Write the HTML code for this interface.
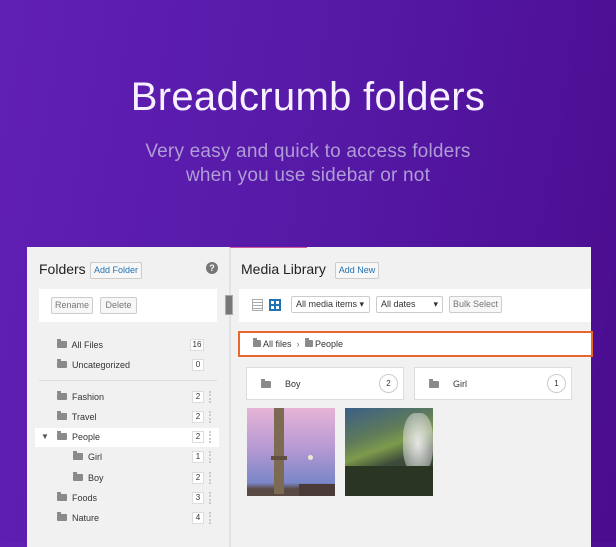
<!DOCTYPE html>
<html><head><style>
*{margin:0;padding:0;box-sizing:border-box}
body{width:616px;height:542px;overflow:hidden;background:linear-gradient(100deg,#6120b4 0%,#5519a6 50%,#4b0c8e 100%);font-family:"Liberation Sans",sans-serif;position:relative}
.t{position:absolute;left:0;width:616px;text-align:center;color:#f6f0ff;font-size:40px;top:75px;letter-spacing:0.3px}
.s{position:absolute;left:0;width:616px;text-align:center;color:#b09cd6;font-size:19px;line-height:24px;top:140px;letter-spacing:0.2px}
.panel{position:absolute;left:27px;top:247px;width:564px;height:300px;background:#f1f1f1}
.div{position:absolute;left:202px;top:0;width:2px;height:300px;background:#e2e2e2}
.a{position:absolute;font-size:9px;color:#333}
.btn{position:absolute;background:#f7f7f7;border:1px solid #ccc;font-size:9px;color:#555;text-align:center;line-height:15px;border-radius:2px}
.fld{display:inline-block;width:10px;height:7px;background:#8a8a8a;border-radius:1px;position:relative}
.fld:before{content:"";position:absolute;left:0;top:-2px;width:4px;height:2px;background:#8a8a8a}
.cnt{position:absolute;width:12px;height:12px;background:#fff;border:1px solid #ddd;font-size:8px;line-height:10px;text-align:center;color:#333}
.dots{position:absolute;width:2px;height:12px;border-left:2px dotted #ccc}
.card{position:absolute;background:#fff;border:1px solid #ddd;height:33px}
.circ{position:absolute;width:19px;height:19px;border-radius:50%;border:1px solid #ccc;font-size:8px;text-align:center;line-height:17px;color:#333}
</style></head><body>
<div class="t">Breadcrumb folders</div>
<div class="s">Very easy and quick to access folders<br>when you use sidebar or not</div>
<div class="panel">
<div class="div"></div>
<div style="position:absolute;left:203px;top:0;width:77px;height:1px;background:#d05aa0"></div>
<div class="a" style="left:12px;top:14px;font-size:14px;color:#222">Folders</div>
<div class="btn" style="left:63px;top:15px;width:52px;color:#2271b1">Add Folder</div>
<div style="position:absolute;left:179px;top:15px;width:12px;height:12px;border-radius:50%;background:#777;color:#fff;font-size:9px;text-align:center;line-height:12px;font-weight:bold">?</div>
<div style="position:absolute;left:12px;top:42px;width:178px;height:33px;background:#fff"></div>
<div class="btn" style="left:24px;top:50px;width:42px;height:17px;color:#777">Rename</div>
<div class="btn" style="left:73px;top:50px;width:37px;height:17px;color:#777">Delete</div>
<div style="position:absolute;left:198px;top:48px;width:8px;height:20px;background:#777;border:1px solid #aaa"></div>
<div style="position:absolute;left:12px;top:133px;width:178px;height:1px;background:#ddd"></div>
<div style="position:absolute;left:8px;top:181px;width:184px;height:19px;background:#fff"></div>
<div class="a" style="left:30px;top:93px"><span class="fld"></span>&nbsp; All Files</div><div class="cnt" style="left:163px;top:92px;width:14px">16</div>
<div class="a" style="left:30px;top:113px"><span class="fld"></span>&nbsp; Uncategorized</div><div class="cnt" style="left:165px;top:112px">0</div>
<div class="a" style="left:30px;top:145px"><span class="fld"></span>&nbsp; Fashion</div><div class="cnt" style="left:165px;top:144px">2</div><div class="dots" style="left:182px;top:144px"></div>
<div class="a" style="left:30px;top:165px"><span class="fld"></span>&nbsp; Travel</div><div class="cnt" style="left:165px;top:164px">2</div><div class="dots" style="left:182px;top:164px"></div>
<div class="a" style="left:14px;top:185px;color:#555;font-size:8px">▼</div>
<div class="a" style="left:30px;top:185px"><span class="fld"></span>&nbsp; People</div><div class="cnt" style="left:165px;top:184px">2</div><div class="dots" style="left:182px;top:184px"></div>
<div class="a" style="left:46px;top:205px"><span class="fld"></span>&nbsp; Girl</div><div class="cnt" style="left:165px;top:204px">1</div><div class="dots" style="left:182px;top:204px"></div>
<div class="a" style="left:46px;top:226px"><span class="fld"></span>&nbsp; Boy</div><div class="cnt" style="left:165px;top:225px">2</div><div class="dots" style="left:182px;top:225px"></div>
<div class="a" style="left:30px;top:246px"><span class="fld"></span>&nbsp; Foods</div><div class="cnt" style="left:165px;top:245px">3</div><div class="dots" style="left:182px;top:245px"></div>
<div class="a" style="left:30px;top:266px"><span class="fld"></span>&nbsp; Nature</div><div class="cnt" style="left:165px;top:265px">4</div><div class="dots" style="left:182px;top:265px"></div>

<div class="a" style="left:214px;top:14px;font-size:14px;color:#222">Media Library</div>
<div class="btn" style="left:308px;top:15px;width:44px;color:#2271b1">Add New</div>
<div style="position:absolute;left:212px;top:42px;width:352px;height:33px;background:#fff"></div>
<div style="position:absolute;left:225px;top:52px;width:11px;height:12px;border:1px solid #aaa;background:repeating-linear-gradient(#fff 0 2px,#aaa 2px 3px)"></div>
<div style="position:absolute;left:242px;top:52px;width:12px;height:12px;border:2px solid #2271b1;background:linear-gradient(#2271b1,#2271b1) center/2px 100% no-repeat,linear-gradient(#2271b1,#2271b1) center/100% 2px no-repeat,#fff"></div>
<div class="btn" style="left:264px;top:49px;width:79px;background:#fff;text-align:left;padding-left:4px;color:#333">All media items ▾</div>
<div class="btn" style="left:349px;top:49px;width:67px;background:#fff;text-align:left;padding-left:4px;color:#333">All dates <span style="float:right;padding-right:4px">▾</span></div>
<div class="btn" style="left:422px;top:49px;width:53px;color:#777">Bulk Select</div>
<div style="position:absolute;left:211px;top:84px;width:355px;height:26px;background:#fff;border:2px solid #e8672a"></div>
<div class="a" style="left:226px;top:92px"><span class="fld" style="width:8px"></span> All files &nbsp;<span style="color:#777">›</span>&nbsp; <span class="fld" style="width:8px"></span> People</div>
<div class="card" style="left:219px;top:120px;width:158px"><div class="fld" style="position:absolute;left:14px;top:13px"></div><div class="a" style="left:38px;top:11px">Boy</div><div class="circ" style="left:132px;top:6px">2</div></div>
<div class="card" style="left:387px;top:120px;width:158px"><div class="fld" style="position:absolute;left:14px;top:13px"></div><div class="a" style="left:38px;top:11px">Girl</div><div class="circ" style="left:132px;top:6px">1</div></div>
<div style="position:absolute;left:220px;top:161px;width:88px;height:88px;background:linear-gradient(#e6b4d6,#b79ad3 45%,#7a86c8 85%,#5a4a44 92%);overflow:hidden">
<div style="position:absolute;left:27px;top:0;width:10px;height:86px;background:#7d6a52"></div>
<div style="position:absolute;left:24px;top:48px;width:16px;height:4px;background:#5f5040"></div>
<div style="position:absolute;left:61px;top:47px;width:5px;height:5px;border-radius:50%;background:#f0e6d0"></div>
<div style="position:absolute;left:52px;top:76px;width:36px;height:12px;background:#4a3a38"></div></div>
<div style="position:absolute;left:318px;top:161px;width:88px;height:88px;background:linear-gradient(160deg,#3a5f88 0%,#5e7a5a 30%,#7d9a4c 45%,#3d4c3a 60%,#2c3a2a 100%);overflow:hidden">
<div style="position:absolute;right:0;top:5px;width:30px;height:60px;background:radial-gradient(#e6e6e6,rgba(220,220,220,0.3));border-radius:40%"></div>
<div style="position:absolute;left:0;top:58px;width:88px;height:30px;background:#2a3524"></div></div>
</div>
</body></html>
